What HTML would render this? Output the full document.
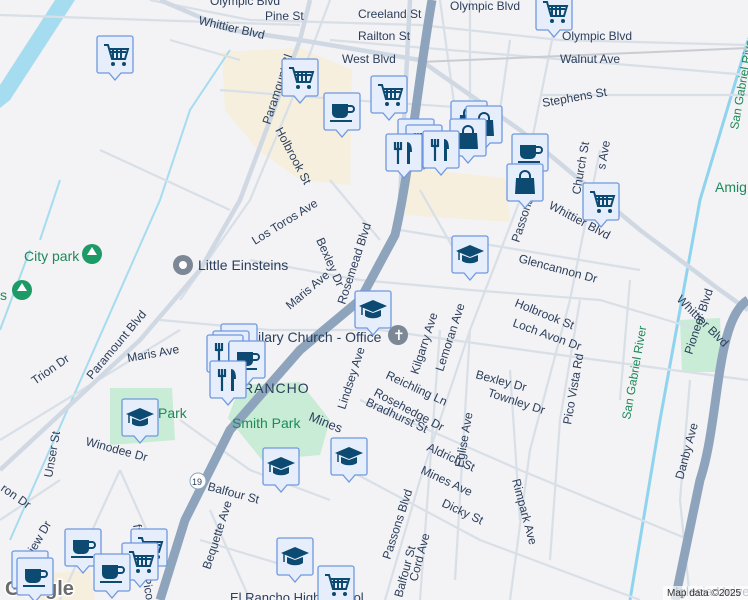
<!DOCTYPE html>
<html><head><meta charset="utf-8"><style>
html,body{margin:0;padding:0;width:748px;height:600px;overflow:hidden;background:#f3f2f4}
svg{display:block}
text{font-family:"Liberation Sans",sans-serif;font-size:12px;fill:#2b3f5c}
.g{fill:#1e8a5a}
.r{fill:none;stroke:#d8dfe7;stroke-width:2.2}
.m{fill:none;stroke:#d0d9e3;stroke-width:4.5}
</style></head><body>
<svg width="748" height="600" viewBox="0 0 748 600" xmlns="http://www.w3.org/2000/svg" style="overflow:hidden">
<defs>
<symbol id="mk" viewBox="0 0 38 46"><path d="M3,1h32a2,2 0 0 1 2,2v33a2,2 0 0 1-2,2h-10l-6,7l-6-7h-10a2,2 0 0 1-2-2v-33a2,2 0 0 1 2-2z" fill="#e6eefc" stroke="#6f98de" stroke-width="1.3"/></symbol>
<g id="cart"><use href="#mk" width="38" height="46"/><path d="M8,10h4l4,14h13l3-10h-18M14,17h16M17,14v10M21,14v10M25,14v10" fill="none" stroke="#0d4a72" stroke-width="2"/><circle cx="17" cy="29" r="2" fill="#0d4a72"/><circle cx="28" cy="29" r="2" fill="#0d4a72"/></g>
<g id="cup"><use href="#mk" width="38" height="46"/><path d="M9,12h16v9a5,5 0 0 1-5,5h-6a5,5 0 0 1-5-5z" fill="#0d4a72"/><path d="M25,14h3a3,3 0 0 1 0,6h-3" fill="none" stroke="#0d4a72" stroke-width="2"/><rect x="7" y="28" width="22" height="2" fill="#0d4a72"/></g>
<g id="fork"><use href="#mk" width="38" height="46"/><path d="M10,9v8M13,9v8M16,9v8M10,16h6M13,16v15" fill="none" stroke="#0d4a72" stroke-width="2.2"/><path d="M22,9c4,0 5,5 5,10h-2v12h-3z" fill="#0d4a72"/></g>
<g id="bag"><use href="#mk" width="38" height="46"/><path d="M10,15h18l1,16h-20z" fill="#0d4a72"/><path d="M14,16v-3a5,5 0 0 1 10,0v3" fill="none" stroke="#0d4a72" stroke-width="2"/></g>
<g id="grad"><use href="#mk" width="38" height="46"/><path d="M5,16l14-6l14,6l-14,6z" fill="#0d4a72"/><path d="M11,20v6c4,3 12,3 16,0v-6l-8,3z" fill="#0d4a72"/><path d="M8,17v8" stroke="#0d4a72" stroke-width="1.5"/></g>
</defs>
<path d="M222,52L300,48L352,70L350,185L300,180L258,150L225,110z" fill="#f6efdd"/>
<path d="M408,168L505,178L510,222L405,215z" fill="#f6efdd"/>
<path d="M30,575L90,570L95,600L30,600z" fill="#f6efdd"/>
<path d="M110,388L172,388L175,440L110,445z" fill="#c8ecd5"/>
<path d="M240,385L300,382L330,420L320,455L262,460L228,418z" fill="#c8ecd5"/>
<path d="M680,320L720,318L722,372L682,372z" fill="#c8ecd5"/>
<path d="M0,85L55,0L75,0L10,100L0,108z" fill="#a6dcef"/>
<path d="M748,40L700,200L660,420L630,600" fill="none" stroke="#8fd4ee" stroke-width="3"/>
<path d="M40,240L60,180M0,330L30,250" fill="none" stroke="#a6dcef" stroke-width="2"/>
<path d="M10,540L160,200L190,110L230,50" fill="none" stroke="#a6dcef" stroke-width="2"/>
<g class="r">
<path d="M150,0L250,20L420,25L560,40L748,45"/><path d="M0,15L300,25"/>
<path d="M330,40L748,75"/><path d="M220,90L350,100L500,110"/>
<path d="M540,95L748,95"/><path d="M330,0L300,80L250,200L180,300"/>
<path d="M560,0L540,100L520,200L470,330L420,480L385,600"/>
<path d="M600,150L570,300L530,450L510,600"/>
<path d="M440,0L455,110"/><path d="M470,0L470,100"/><path d="M510,40L500,110"/>
<path d="M160,320L270,330L380,330L560,355L748,380"/>
<path d="M0,440L180,330"/><path d="M60,600L120,470"/>
<path d="M250,260L360,280L470,290L600,300L700,330"/>
<path d="M360,400L520,470L690,540"/><path d="M330,460L480,540L640,600"/>
<path d="M400,230L520,250L640,270"/><path d="M420,190L460,260"/>
<path d="M180,420L250,470L330,500"/><path d="M210,510L250,600"/>
<path d="M120,470L160,560"/><path d="M0,520L60,480"/><path d="M200,540L300,570"/>
<path d="M440,330L420,600"/><path d="M470,330L455,580"/><path d="M510,370L520,520"/>
<path d="M580,300L560,420L550,560"/><path d="M630,280L620,400"/>
<path d="M330,180L380,240"/><path d="M100,150L230,210"/><path d="M170,40L240,60"/>
<path d="M690,380L680,500L690,600"/>
</g>
<g class="m">
<path d="M160,0L230,30L300,40L420,60L520,130L640,230L720,290L748,310"/>
<path d="M0,470L140,340L200,270L240,200L270,120L300,40L310,0"/>
<path d="M410,0L405,100L400,200"/>
</g>
<path d="M420,62L748,48" stroke="#c9cdd3" stroke-width="2" fill="none"/>
<path d="M432,0C418,80 410,170 395,235L360,300L300,350L230,430L185,520L160,600" fill="none" stroke="#8ea4bd" stroke-width="9"/>
<path d="M748,300C715,320 720,420 700,480L675,600" fill="none" stroke="#8ea4bd" stroke-width="9"/>
<circle cx="198" cy="481" r="8" fill="#fff" stroke="#8ea4bd"/><text x="192" y="485" style="font-size:9px">19</text>
<circle cx="92" cy="254" r="10" fill="#1e9a66"/><path d="M92,247l-5,8h10z" fill="#fff"/>
<circle cx="22" cy="290" r="10" fill="#1e9a66"/><path d="M22,283l-5,8h10z" fill="#fff"/>
<circle cx="183" cy="265" r="10" fill="#7c8896"/><circle cx="183" cy="265" r="4" fill="#fff"/>
<circle cx="398" cy="335" r="10" fill="#7c8896"/><text x="393" y="340" style="fill:#fff;font-size:14px">✝</text>
<text x="198" y="24" transform="rotate(13 198 24)">Whittier Blvd</text>
<text x="210" y="5">Olympic Blvd</text><text x="265" y="20">Pine St</text>
<text x="358" y="18">Creeland St</text><text x="450" y="10">Olympic Blvd</text>
<text x="358" y="40">Railton St</text><text x="562" y="40">Olympic Blvd</text>
<text x="560" y="63">Walnut Ave</text><text x="543" y="107" transform="rotate(-10 543 107)">Stephens St</text>
<text x="342" y="63">West Blvd</text>
<text x="270" y="125" transform="rotate(-72 270 125)">Paramount Bl</text>
<text x="275" y="130" transform="rotate(62 275 130)">Holbrook St</text>
<text x="255" y="245" transform="rotate(-32 255 245)">Los Toros Ave</text>
<text x="316" y="240" transform="rotate(66 316 240)">Bexley Dr</text>
<text x="290" y="310" transform="rotate(-40 290 310)">Maris Ave</text>
<text x="345" y="305" transform="rotate(-72 345 305)">Rosemead Blvd</text>
<text x="198" y="270" style="font-size:14px">Little Einsteins</text>
<text x="24" y="261" class="g" style="font-size:14px">City park</text>
<text x="0" y="300" class="g" style="font-size:14px">s</text>
<text x="92" y="380" transform="rotate(-50 92 380)">Paramount Blvd</text>
<text x="128" y="362" transform="rotate(-10 128 362)">Maris Ave</text>
<text x="35" y="385" transform="rotate(-35 35 385)">Trion Dr</text>
<text x="258" y="342" style="font-size:14px">ilary Church - Office</text>
<text x="243" y="393" style="font-size:14px;letter-spacing:1px">RANCHO</text>
<text x="158" y="418" class="g" style="font-size:14px">Park</text>
<text x="232" y="428" class="g" style="font-size:14px">Smith Park</text>
<text x="308" y="420" transform="rotate(22 308 420)" style="font-size:13px">Mines</text>
<text x="345" y="410" transform="rotate(-72 345 410)">Lindsey Ave</text>
<text x="385" y="378" transform="rotate(25 385 378)">Reichling Ln</text>
<text x="373" y="395" transform="rotate(28 373 395)">Rosehedge Dr</text>
<text x="365" y="405" transform="rotate(25 365 405)">Bradhurst St</text>
<text x="418" y="375" transform="rotate(-72 418 375)">Kilgarry Ave</text>
<text x="443" y="372" transform="rotate(-72 443 372)">Lemoran Ave</text>
<text x="519" y="243" transform="rotate(-72 519 243)">Passons Blvd</text>
<text x="548" y="208" transform="rotate(28 548 208)">Whittier Blvd</text>
<text x="518" y="262" transform="rotate(15 518 262)">Glencannon Dr</text>
<text x="514" y="306" transform="rotate(22 514 306)">Holbrook St</text>
<text x="512" y="326" transform="rotate(20 512 326)">Loch Avon Dr</text>
<text x="676" y="300" transform="rotate(45 676 300)">Whittier Blvd</text>
<text x="475" y="378" transform="rotate(15 475 378)">Bexley Dr</text>
<text x="487" y="396" transform="rotate(18 487 396)">Townley Dr</text>
<text x="571" y="425" transform="rotate(-80 571 425)">Pico Vista Rd</text>
<text x="463" y="468" transform="rotate(-80 463 468)">Eglise Ave</text>
<text x="426" y="450" transform="rotate(25 426 450)">Aldrich St</text>
<text x="420" y="473" transform="rotate(25 420 473)">Mines Ave</text>
<text x="441" y="506" transform="rotate(25 441 506)">Dicky St</text>
<text x="512" y="480" transform="rotate(75 512 480)">Rimpark Ave</text>
<text x="390" y="560" transform="rotate(-72 390 560)">Passons Blvd</text>
<text x="417" y="582" transform="rotate(-75 417 582)">Cord Ave</text>
<text x="402" y="598" transform="rotate(-75 402 598)">Balfour St</text>
<text x="207" y="490" transform="rotate(15 207 490)">Balfour St</text>
<text x="210" y="570" transform="rotate(-72 210 570)">Bequette Ave</text>
<text x="85" y="445" transform="rotate(15 85 445)">Winodee Dr</text>
<text x="52" y="478" transform="rotate(-80 52 478)">Unser St</text>
<text x="133" y="525" transform="rotate(80 133 525)">fman and Pico Rd</text>
<text x="0" y="490" transform="rotate(35 0 490)">ron Dr</text>
<text x="25" y="570" transform="rotate(-60 25 570)">onview Dr</text>
<text x="630" y="420" transform="rotate(-80 630 420)" class="g">San Gabriel River</text>
<text x="738" y="130" transform="rotate(-80 738 130)" class="g">San Gabriel River</text>
<text x="715" y="192" class="g" style="font-size:14px">Amig</text>
<text x="692" y="355" transform="rotate(-72 692 355)">Pioneer Blvd</text>
<text x="683" y="480" transform="rotate(-75 683 480)">Danby Ave</text>
<text x="580" y="195" transform="rotate(-80 580 195)">Church St</text>
<text x="605" y="170" transform="rotate(-80 605 170)">s Ave</text>
<text x="230" y="602" style="font-size:13px">El Rancho High School</text>
<text x="675" y="596" style="font-size:13px">Iglesia Univers</text>
<rect x="663" y="586" width="85" height="14" fill="rgba(255,255,255,0.7)"/>
<text x="667" y="596" style="font-size:10px;fill:#333">Map data ©2025</text>
<text x="5" y="595" style="font-size:20px;font-weight:bold;fill:#6b6b6b;stroke:#fff;stroke-width:3;paint-order:stroke">Google</text>
<use href="#cart" x="96" y="35"/><use href="#cart" x="281" y="58"/><use href="#cup" x="323" y="92"/>
<use href="#cart" x="370" y="75"/><use href="#cart" x="535" y="-8"/>
<use href="#fork" x="397" y="118"/><use href="#fork" x="405" y="124"/>
<use href="#bag" x="450" y="100"/><use href="#bag" x="465" y="105"/><use href="#bag" x="449" y="118"/>
<use href="#fork" x="385" y="133"/><use href="#fork" x="422" y="130"/>
<use href="#cup" x="511" y="133"/><use href="#bag" x="506" y="163"/><use href="#cart" x="582" y="182"/>
<use href="#grad" x="451" y="235"/><use href="#grad" x="354" y="290"/>
<use href="#fork" x="220" y="323"/><use href="#fork" x="212" y="330"/><use href="#fork" x="206" y="334"/>
<use href="#cup" x="228" y="340"/><use href="#fork" x="209" y="360"/>
<use href="#grad" x="121" y="398"/><use href="#grad" x="262" y="447"/><use href="#grad" x="330" y="437"/>
<use href="#cup" x="64" y="528"/><use href="#cart" x="130" y="528"/><use href="#cart" x="121" y="542"/>
<use href="#cup" x="11" y="550"/><use href="#cup" x="16" y="557"/><use href="#cup" x="93" y="553"/>
<use href="#grad" x="276" y="537"/><use href="#cart" x="317" y="565"/>
</svg>
</body></html>
